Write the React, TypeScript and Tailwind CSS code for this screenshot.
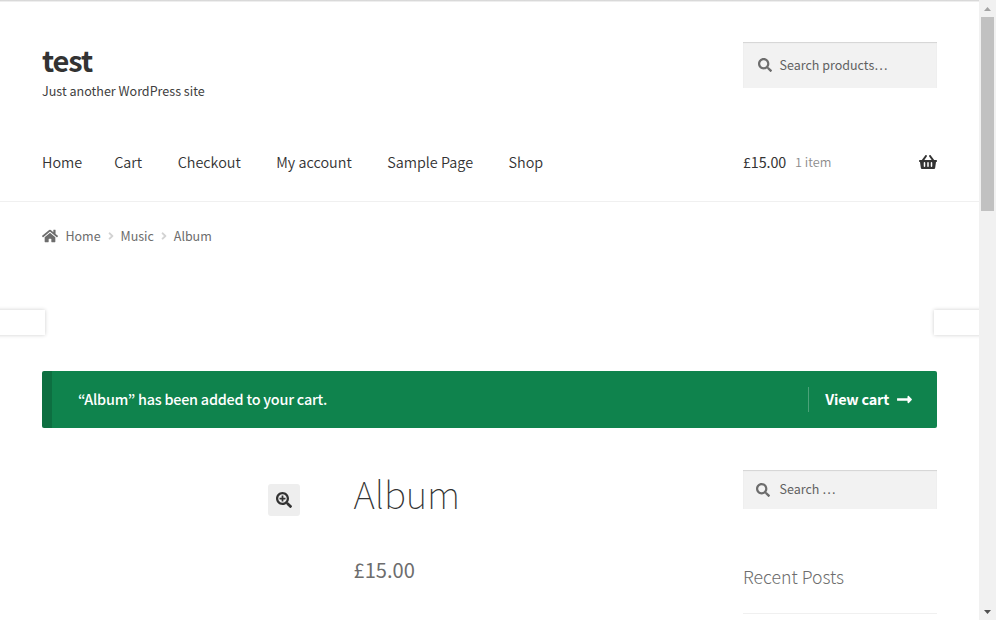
import {
  FaAngleRight,
  FaHome,
  FaLongArrowAltRight,
  FaSearch,
  FaSearchPlus,
  FaShoppingBasket,
} from "react-icons/fa";

const navItems = ["Home", "Cart", "Checkout", "My account", "Sample Page", "Shop"];

function SearchBox({ label, className, iconClass }: { label: string; className: string; iconClass: string }) {
  return (
    <div
      className={`flex w-[194px] items-center bg-[#f2f2f2] text-[#616161] shadow-[inset_0_1px_1px_rgba(0,0,0,0.125)] ${className}`}
    >
      <FaSearch className={`size-[14px] shrink-0 text-[#6d6d6d] ${iconClass}`} />
      <span className="text-[12.5px] leading-5">{label}</span>
    </div>
  );
}

function Header() {
  return (
    <header className="h-[202px] border-b border-[#f0f0f0] pl-[42px] pr-[42px]">
      <div className="-mx-[42px] h-[2px] bg-linear-to-b from-[#d9d9d9] from-50% to-[#eeeeee] to-50%" />
      <div className="box-content flex h-[97px] justify-between pt-10">
        <div>
          <h1 className="-mt-0.5 h-[41px] text-[29px] font-bold leading-[39px] tracking-[-1.1px] text-[#333]">test</h1>
          <p className="text-[12.55px] leading-5 text-[#404040]">Just another WordPress site</p>
        </div>
        <SearchBox label="Search products…" className="h-[46px] pl-[15px]" iconClass="mr-[7.5px]" />
      </div>
      <div className="flex h-[45px] items-center justify-between text-[#333]">
        <nav className="flex text-[14.4px] font-[350] leading-6">
          {navItems.map((item) => (
            <a key={item} className="mr-[35.5px] whitespace-nowrap first:mr-8">{item}</a>
          ))}
        </nav>
        <div className="flex w-[194px] items-center">
          <span className="text-[14.3px] leading-6 tracking-[-0.1px]">£15.00</span>
          <span className="ml-[9px] text-[12.7px] font-[350] leading-6 text-[#8c8c8c]">1 item</span>
          <FaShoppingBasket className="ml-auto size-[18px]" />
        </div>
      </div>
    </header>
  );
}

function Breadcrumb() {
  return (
    <nav className="flex h-5 items-center text-[12.5px] leading-5 tracking-[-0.03px] text-[#6d6d6d]">
      <FaHome className="mr-[7.5px] size-4" />
      <span>Home</span>
      <FaAngleRight className="mx-[4px] size-[12px] text-[#d3d3d3]" />
      <span>Music</span>
      <FaAngleRight className="mx-[4px] size-[12px] text-[#d3d3d3]" />
      <span>Album</span>
    </nav>
  );
}

function Notice() {
  return (
    <div className="mt-[125px] flex h-[57px] items-center rounded-[2px] border-l-10 border-[#0d6f41] bg-[#0f834d] pl-[26px] pr-[24px] text-[14.4px] leading-[26px] text-white">
      <span className="-mt-px font-medium tracking-[-0.22px]">“Album” has been added to your cart.</span>
      <a className="ml-auto flex h-[25px] items-center border-l border-white/25 pl-4 font-bold tracking-[-0.2px]">
        <span className="-mt-px">View cart</span>
        <FaLongArrowAltRight className="-mt-px ml-[7px] size-[17px]" />
      </a>
    </div>
  );
}

function ScrollBar() {
  return (
    <div className="flex w-[17px] shrink-0 flex-col items-center bg-[#f1f1f1]">
      <div className="flex h-[17px] items-center">
        <svg width="7" height="4" viewBox="0 0 7 4"><path d="M0 4L3.5 0L7 4Z" fill="#a3a3a3" /></svg>
      </div>
      <div className="h-[194px] w-[13px] bg-[#c1c1c1]" />
      <div className="mt-auto flex h-[17px] items-center">
        <svg width="7" height="4" viewBox="0 0 7 4"><path d="M0 0L3.5 4L7 0Z" fill="#505050" /></svg>
      </div>
    </div>
  );
}

export default function App() {
  return (
    <div className="flex h-[620px] w-[996px] overflow-hidden bg-white font-['Noto_Sans_CJK_JP',sans-serif]">
      <div className="relative w-[979px] shrink-0 overflow-hidden">
        <Header />
        <main className="px-[42px] pt-6">
          <Breadcrumb />
          <Notice />
          <div className="flex pt-[42px]">
            <div className="flex w-[258px] justify-end pt-[14px]">
              <button className="flex size-8 items-center justify-center rounded-[3px] bg-[#eee] text-[#333]">
                <FaSearchPlus className="size-4" />
              </button>
            </div>
            <section className="ml-[53.5px]">
              <h2 className="-mt-[2px] h-[51px] text-[37.2px] font-thin leading-[51px] tracking-[-0.2px] text-[#333]">Album</h2>
              <p className="mt-[37px] text-[20.1px] leading-[28px] text-[#6d6d6d]">£15.00</p>
            </section>
            <aside className="ml-auto w-[194px]">
              <SearchBox label="Search …" className="h-[39px] pb-px pl-[13px]" iconClass="mr-[9.5px] translate-y-px" />
              <h3 className="mt-[53px] h-[52px] border-b border-[#f0f0f0] text-[17.7px] font-light leading-[28px] text-[#6d6d6d]">
                Recent Posts
              </h3>
            </aside>
          </div>
        </main>
        <div className="absolute left-[-10px] top-[310px] h-[25px] w-[55px] bg-white shadow-[0_0_4px_rgba(0,0,0,0.2)]" />
        <div className="absolute right-[-10px] top-[310px] h-[25px] w-[55px] bg-white shadow-[0_0_4px_rgba(0,0,0,0.2)]" />
      </div>
      <ScrollBar />
    </div>
  );
}
